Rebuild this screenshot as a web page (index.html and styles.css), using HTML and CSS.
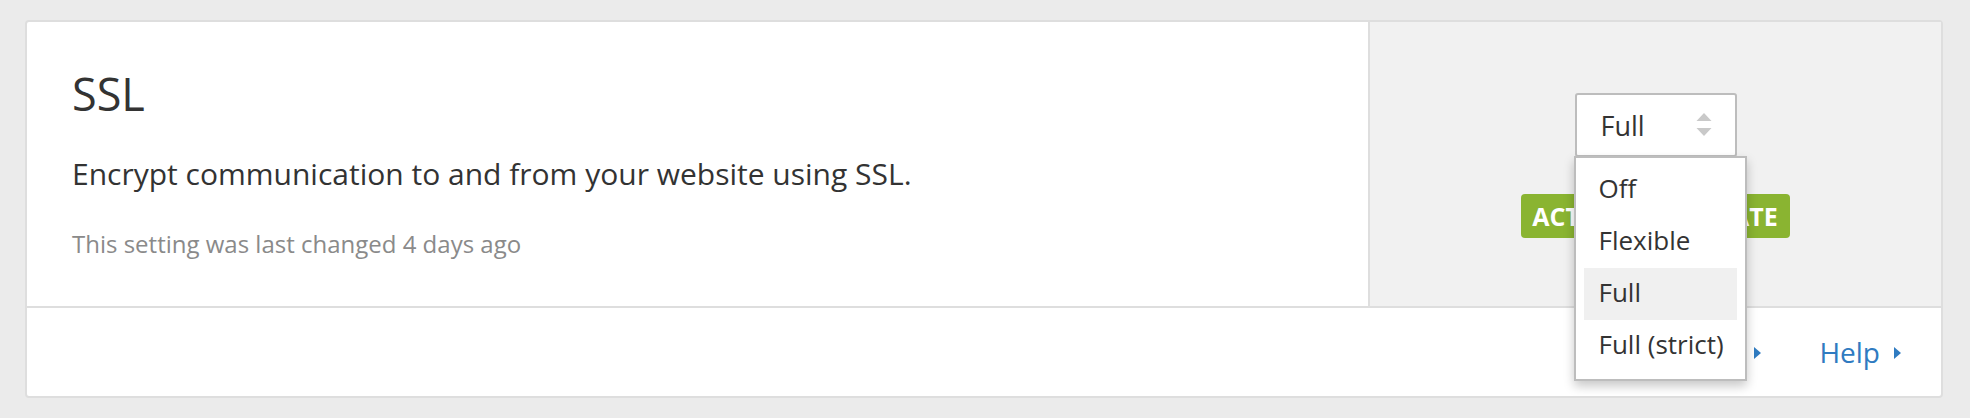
FILE: index.html
```html
<!DOCTYPE html>
<html lang="en">
<head>
<meta charset="utf-8">
<title>SSL</title>
<link rel="stylesheet" href="styles.css">
</head>
<body>
<div class="card">
  <div class="card-main">
    <div class="card-info">
      <h2 class="card-title">SSL</h2>
      <p class="card-desc">Encrypt communication to and from your website using SSL.</p>
      <p class="card-meta">This setting was last changed 4 days ago</p>
    </div>
    <div class="card-control">
      <div class="select-wrap">
        <div class="select-box">
          <span class="select-value">Full</span>
          <svg class="select-arrows" width="16" height="24" viewBox="0 0 16 24">
            <path d="M8 0 L15.5 8 L0.5 8 Z" fill="#c9c9c9"/>
            <path d="M0.5 15 L15.5 15 L8 23 Z" fill="#c9c9c9"/>
          </svg>
        </div>
        <ul class="select-list">
          <li class="select-item">Off</li>
          <li class="select-item">Flexible</li>
          <li class="select-item is-active">Full</li>
          <li class="select-item">Full (strict)</li>
        </ul>
      </div>
      <span class="badge">ACTIVE CERTIFICATE</span>
    </div>
  </div>
  <div class="card-footer">
    <a class="footer-link" href="#">API<span class="caret"></span></a>
    <a class="footer-link" href="#">Help<span class="caret"></span></a>
  </div>
</div>
</body>
</html>
```

FILE: styles.css
```css
* { box-sizing: border-box; }

html, body {
  margin: 0;
  padding: 0;
}

body {
  background: #ebebeb;
  font-family: "Open Sans", "Noto Sans", sans-serif;
  padding: 20px 27px 20px 25px;
  color: #333333;
}

.card {
  background: #ffffff;
  border: 2px solid #dedede;
  border-radius: 4px;
}

.card-main {
  display: flex;
  height: 286px;
  border-bottom: 2px solid #dedede;
}

.card-info {
  flex: 1;
  padding: 49px 45px 0 45px;
}

.card-title {
  margin: 0;
  font-size: 45px;
  line-height: 1;
  font-weight: 400;
  color: #333333;
}

.card-desc {
  margin: 43px 0 0;
  font-size: 30px;
  line-height: 1;
  color: #333333;
}

.card-meta {
  margin: 43px 0 0;
  font-size: 24px;
  line-height: 1;
  color: #8a8a8a;
}

.card-control {
  flex: 0 0 573px;
  border-left: 2px solid #dedede;
  background: #f1f1f1;
  display: flex;
  flex-direction: column;
  align-items: center;
  justify-content: center;
  gap: 37px;
  padding-top: 3px;
}

.select-wrap {
  position: relative;
  width: 162px;
  height: 64px;
}

.select-box {
  height: 64px;
  border: 2px solid #bdbdbd;
  border-radius: 3px;
  background: #ffffff;
  display: flex;
  align-items: center;
  justify-content: space-between;
  padding: 0 23px 0 24px;
}

.select-value {
  font-size: 27px;
  line-height: 1;
  color: #333333;
}

.select-arrows {
  display: block;
}

.select-list {
  position: absolute;
  z-index: 2;
  top: 63px;
  left: -1px;
  width: 173px;
  margin: 0;
  padding: 6px 8px 7px;
  list-style: none;
  background: #ffffff;
  border: 2px solid #bdbdbd;
  box-shadow: 0 5px 10px rgba(0, 0, 0, 0.22);
}

.select-item {
  height: 52px;
  line-height: 48px;
  padding-left: 15px;
  font-size: 26px;
  color: #333333;
  white-space: nowrap;
}

.select-item.is-active {
  background: #f0f0f0;
}

.badge {
  display: inline-block;
  height: 44px;
  line-height: 44px;
  padding: 0 12px 0 11px;
  border-radius: 4px;
  background: #8ab431;
  color: #ffffff;
  font-size: 25px;
  font-weight: 700;
  white-space: nowrap;
}

.card-footer {
  height: 88px;
  display: flex;
  justify-content: flex-end;
  align-items: center;
  gap: 58px;
  padding-right: 40px;
}

.footer-link {
  display: flex;
  align-items: center;
  gap: 14px;
  font-size: 28px;
  line-height: 1;
  color: #2f7bc1;
  text-decoration: none;
}

.caret {
  display: block;
  width: 0;
  height: 0;
  border-left: 7px solid #2f7bc1;
  border-top: 6.5px solid transparent;
  border-bottom: 6.5px solid transparent;
  margin-top: 2px;
}
```
